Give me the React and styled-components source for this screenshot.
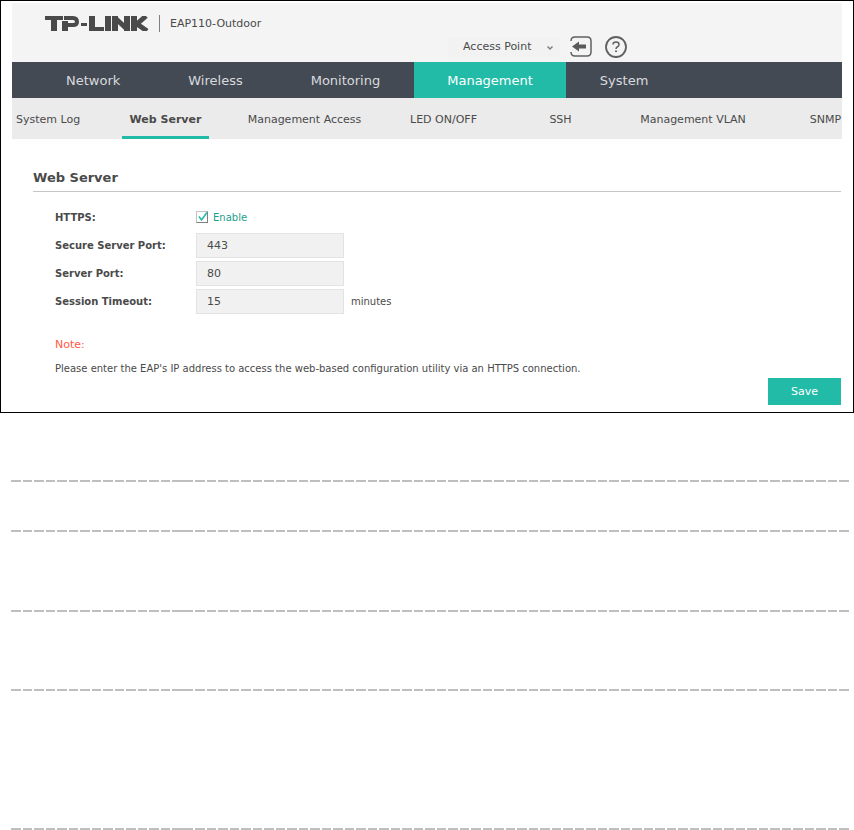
import React, { useState } from "react";

import styled, { createGlobalStyle } from "styled-components";

const mainTabs = ["Network", "Wireless", "Monitoring", "Management", "System"];

const subTabs = [
  { label: "System Log", width: 80 },
  { label: "Web Server", width: 87 },
  { label: "Management Access", width: 131 },
  { label: "LED ON/OFF", width: 87 },
  { label: "SSH", width: 87 },
  { label: "Management VLAN", width: 118 },
  { label: "SNMP", width: 87 },
];

export default function App() {
  const [https, setHttps] = useState(true);
  const [securePort, setSecurePort] = useState("443");
  const [serverPort, setServerPort] = useState("80");
  const [timeout, setTimeoutValue] = useState("15");

  return (
    <>
      <GlobalStyle />
      <Frame>
        <Header>
          <Brand>
            <Logo />
            <Model>EAP110-Outdoor</Model>
          </Brand>
          <Tools>
            <SelectBox>
              <ModeSelect aria-label="Mode" defaultValue="Access Point">
                <option>Access Point</option>
              </ModeSelect>
              <Chevron />
            </SelectBox>
            <IconButton type="button" aria-label="Log out">
              <LogoutIcon />
            </IconButton>
            <IconButton type="button" aria-label="Help">
              <HelpIcon />
            </IconButton>
          </Tools>
        </Header>

        <MainNav>
          {mainTabs.map((tab) => (
            <MainTab key={tab} href="#" $active={tab === "Management"}>
              {tab}
            </MainTab>
          ))}
        </MainNav>

        <SubNav>
          {subTabs.map((tab) => (
            <SubTab
              key={tab.label}
              href="#"
              $width={tab.width}
              $active={tab.label === "Web Server"}
            >
              {tab.label}
            </SubTab>
          ))}
        </SubNav>

        <Content>
          <Title>Web Server</Title>
          <Form onSubmit={(e) => e.preventDefault()}>
            <Row>
              <Label htmlFor="https">HTTPS:</Label>
              <CheckBox>
                <CheckInput
                  id="https"
                  type="checkbox"
                  checked={https}
                  onChange={(e) => setHttps(e.target.checked)}
                />
                {https && <CheckMark />}
              </CheckBox>
              <Enable htmlFor="https">Enable</Enable>
            </Row>
            <Row>
              <Label htmlFor="secure">Secure Server Port:</Label>
              <Input
                id="secure"
                value={securePort}
                onChange={(e) => setSecurePort(e.target.value)}
              />
            </Row>
            <Row>
              <Label htmlFor="server">Server Port:</Label>
              <Input
                id="server"
                value={serverPort}
                onChange={(e) => setServerPort(e.target.value)}
              />
            </Row>
            <Row>
              <Label htmlFor="timeout">Session Timeout:</Label>
              <Input
                id="timeout"
                value={timeout}
                onChange={(e) => setTimeoutValue(e.target.value)}
              />
              <Unit>minutes</Unit>
            </Row>
            <NoteTitle>Note:</NoteTitle>
            <NoteText>
              Please enter the EAP's IP address to access the web-based
              configuration utility via an HTTPS connection.
            </NoteText>
            <Actions>
              <SaveButton type="submit">Save</SaveButton>
            </Actions>
          </Form>
        </Content>
      </Frame>

      <Rules>
        <DashedRule $space={67} />
        <DashedRule $space={48} />
        <DashedRule $space={78} />
        <DashedRule $space={77} />
        <DashedRule $space={137} />
      </Rules>
    </>
  );
}

const Logo = () => (
  <LogoSvg role="img" aria-label="TP-LINK" viewBox="0 0 105 15">
    <g fill="#4a4a4a">
      <rect width="18" height="4" />
      <rect x="6" width="6" height="15" />
      <rect x="17" y="5" width="6" height="10" />
      <rect x="36" y="7" width="6" height="3" />
      <rect x="44" width="6" height="15" />
      <rect x="44" y="11" width="15" height="4" />
      <rect x="60" width="6" height="15" />
      <rect x="67" width="6" height="15" />
      <rect x="79" width="6" height="15" />
      <rect x="86" width="6" height="15" />
    </g>
    <g fill="none" stroke="#4a4a4a">
      <path d="M19 2H28Q32 2 32 6Q32 9 28 9H23" strokeWidth="4" />
      <path d="M69 1L83 14M101 0L92 8L102 15" strokeWidth="5" />
    </g>
  </LogoSvg>
);

const LogoutIcon = () => (
  <svg width="22" height="22" viewBox="0 0 22 22" fill="none">
    <path
      d="M1 5Q1 1 5 1H17Q21 1 21 5V16Q21 20 17 20H5Q1 20 1 16"
      stroke="#606060"
      strokeWidth="1.5"
    />
    <path d="M2 10.5L9 5.5V8.5H16V12.5H9V15.5Z" fill="#5a5a5a" />
  </svg>
);

const HelpIcon = () => (
  <svg width="22" height="22" viewBox="0 0 22 22" fill="none">
    <circle cx="11" cy="11" r="10" stroke="#606060" strokeWidth="1.8" />
    <path
      d="M8 8.5Q8 6 11 6Q14 6 14 8.5Q14 10 12.5 10.800Q11 11.500 11 13"
      stroke="#606060"
      strokeWidth="1.5"
    />
    <path d="M10 14.500H12V16H10Z" fill="#606060" />
  </svg>
);

const Chevron = () => (
  <ChevronSvg viewBox="0 0 8 6" fill="none">
    <path d="M1.500 1.500L4 4L6.500 1.500" stroke="#808080" strokeWidth="1.5" />
  </ChevronSvg>
);

const CheckMark = () => (
  <CheckSvg viewBox="0 0 12 12" fill="none">
    <path d="M3 5.500L5.500 9L11 1.500" stroke="#21bba7" strokeWidth="1.6" />
  </CheckSvg>
);

const GlobalStyle = createGlobalStyle`
  * {
    box-sizing: border-box;
  }

  body {
    margin: 0;
    background: #fff;
    color: #4a4a4a;
    font-family: "DejaVu Sans", Verdana, sans-serif;
    font-size: 11px;
  }
`;

const Frame = styled.div`
  border: 1px solid #000;
  padding: 2px 11px 7px;
`;

const Header = styled.header`
  height: 59px;
  background: #f4f4f4;
`;

const Brand = styled.div`
  display: flex;
  align-items: center;
  height: 32px;
  padding: 9px 0 0 33px;
`;

const LogoSvg = styled.svg`
  width: 105px;
  height: 15px;
`;

const Model = styled.span`
  margin-left: 9px;
  padding-left: 10px;
  border-left: 1px solid #808080;
  line-height: 17px;
`;

const Tools = styled.div`
  display: flex;
  align-items: center;
  height: 24px;
  padding-left: 436px;
`;

const SelectBox = styled.div`
  position: relative;
  width: 112px;
  margin-right: 10px;
`;

const ModeSelect = styled.select`
  appearance: none;
  display: block;
  width: 100%;
  height: 20px;
  padding: 0 0 2px 15px;
  border: 0;
  background: #f2f2f2;
  color: #4a4a4a;
  font: inherit;
`;

const ChevronSvg = styled.svg`
  position: absolute;
  right: 6px;
  top: 8px;
  width: 8px;
  height: 6px;
  pointer-events: none;
`;

const IconButton = styled.button`
  display: flex;
  width: 22px;
  height: 22px;
  margin-right: 13px;
  padding: 0;
  border: 0;
  background: none;
`;

const MainNav = styled.nav`
  display: flex;
  height: 36px;
  padding-left: 20px;
  background: #434a54;
`;

const MainTab = styled.a`
  padding: 0 ${({ $active }) => ($active ? "33px" : "34px")};
  background: ${({ $active }) => ($active ? "#21bba7" : "transparent")};
  color: ${({ $active }) => ($active ? "#fff" : "#d8dade")};
  font-size: 13px;
  line-height: 37px;
  text-decoration: none;
`;

const SubNav = styled.nav`
  display: flex;
  gap: 30px;
  height: 41px;
  overflow: hidden;
  background: #ebebeb;
`;

const SubTab = styled.a`
  flex: none;
  width: ${({ $width }) => $width}px;
  border-bottom: 3px solid
    ${({ $active }) => ($active ? "#21bba7" : "transparent")};
  color: #4a4a4a;
  font-weight: ${({ $active }) => ($active ? "bold" : "normal")};
  line-height: 43px;
  text-align: center;
  text-decoration: none;
  white-space: nowrap;

  &:first-child {
    padding-left: 4px;
    text-align: left;
  }
`;

const Content = styled.main`
  padding: 28px 1px 0 21px;
`;

const Title = styled.h1`
  margin: 0;
  padding-bottom: 2px;
  border-bottom: 1px solid #c6c6c6;
  font-size: 13px;
  line-height: 22px;
`;

const Form = styled.form`
  padding: 11px 0 0 22px;
`;

const Row = styled.div`
  display: flex;
  align-items: center;
  height: 28px;
`;

const Label = styled.label`
  width: 141px;
  font-size: 10px;
  font-weight: bold;
`;

const CheckBox = styled.span`
  position: relative;
  width: 12px;
  height: 12px;
  margin-right: 5px;
`;

const CheckInput = styled.input`
  appearance: none;
  display: block;
  width: 12px;
  height: 12px;
  margin: 0;
  border: 1px solid;
  border-color: #c4c4c4 #808080 #808080 #c4c4c4;
`;

const CheckSvg = styled.svg`
  position: absolute;
  inset: 0;
  pointer-events: none;
`;

const Enable = styled.label`
  color: #1ba08c;
  font-size: 10px;
`;

const Input = styled.input`
  width: 148px;
  height: 25px;
  padding: 0 10px;
  border: 1px solid #e3e3e3;
  background: #f1f1f1;
  color: #4a4a4a;
  font: inherit;
`;

const Unit = styled.span`
  margin-left: 7px;
  font-size: 10px;
`;

const NoteTitle = styled.div`
  margin-top: 22px;
  color: #ff5a44;
  line-height: 16px;
`;

const NoteText = styled.p`
  margin: 8px 0 0;
  font-size: 10px;
  line-height: 16px;
`;

const Actions = styled.div`
  display: flex;
  justify-content: flex-end;
  padding-top: 1px;
`;

const SaveButton = styled.button`
  width: 73px;
  height: 27px;
  border: 0;
  background: #21bba7;
  color: #fff;
  font: inherit;
`;

const Rules = styled.div`
  padding: 0 5px 0 11px;
`;

// two of the dashes run together near the left end
const DashedRule = styled.hr`
  height: 2px;
  margin: ${({ $space }) => $space}px 0 0;
  border: 0;
  background: linear-gradient(
      to right,
      transparent 171px,
      #bfbfbf 171px 173px,
      transparent 173px
    ),
    repeating-linear-gradient(
      to right,
      #bfbfbf 0 10px,
      #fff 10px 12px,
      #bfbfbf 12px 21px,
      #fff 21px 23px
    );
`;
